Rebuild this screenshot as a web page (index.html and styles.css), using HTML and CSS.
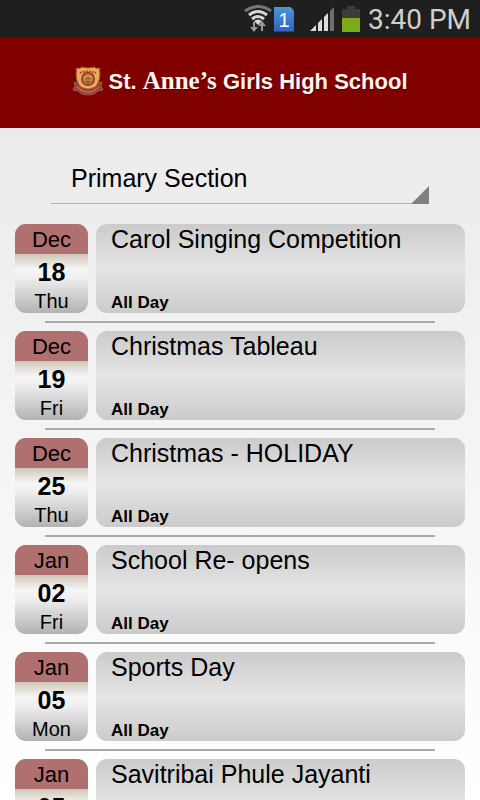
FILE: index.html
```html
<!DOCTYPE html>
<html lang="en">
<head>
  <meta charset="UTF-8" />
  <meta name="viewport" content="width=device-width, initial-scale=1" />
  <title>St. Anne’s Girls High School</title>
  <link rel="stylesheet" href="styles.css">
</head>
<body>

  <div class="status-bar">
    <svg class="wifi" width="28" height="28" viewBox="0 0 28 28" fill="none" stroke="#d6d6d6" stroke-width="3">
      <path d="M1 6Q14 -3 27 6" stroke="#777" />
      <path d="M5 10Q14 3 23 10" />
      <path d="M8 14Q14 9 20 14" />
      <path d="M10 16Q14 13 18 16L14 20z" fill="#d6d6d6" stroke="none" />
      <path d="M10 17v7M18 26v-7" stroke="#999" stroke-width="2" />
      <path d="M6 22h8l-4 5zM14 21h8l-4 -5z" fill="#999" stroke="none" />
    </svg>
    <span class="sim">1</span>
    <svg class="signal" width="24" height="24" viewBox="0 0 24 24" fill="#dcdcdc">
      <path d="M0 24l6-6v6zM8 24v-8l4-4v12zM14 24v-14l4-4v18z" />
      <path d="M20 24v-20l4-4v24z" fill="#6e6e6e" />
    </svg>
    <svg class="battery" width="18" height="26" viewBox="0 0 18 26">
      <path d="M5 0h8v3h5v9H0V3h5z" fill="#3c3c3c" />
      <path d="M0 12h18v14H0z" fill="#7cab17" />
    </svg>
    <span class="time">3:40 PM</span>
  </div>

  <header class="header">
    <svg class="crest" width="32" height="30" viewBox="0 0 32 30">
      <path d="M4 2q4 1 6-1q6 2 12 0q2 2 6 1q-1 3 0 6q0 13-12 18Q4 21 4 8q1-3 0-6z" fill="#eba955" stroke="#8c5638" />
      <path d="M8 7q8-3 16 0" fill="none" stroke="#a8502f" stroke-width="2" stroke-dasharray="2 1" />
      <circle cx="16" cy="13" r="6" fill="#d98a45" stroke="#a03c2c" stroke-width="2" />
      <path d="M16 9l2 3 2 2-3 3h-2l-3-3 2-2z" fill="#79502b" />
      <path d="M14 11h4M13 14h6" stroke="#f0c063" />
      <path d="M2 16l4 1q1 5 10 6q9-1 10-6l4-1l-1 4l2 4l-5 1q-3 4-10 4T6 25l-5-1l2-4z" fill="#a33a30" stroke="#8a6250" />
      <path d="M5 21q11 10 22 0" fill="none" stroke="#cf8065" stroke-width="2" stroke-dasharray="1 1" />
    </svg>
    <h1>St. <span class="serif">Anne’s</span> Girls High School</h1>
  </header>

  <main>
    <div class="section-picker">
      <select name="section" aria-label="Section">
        <option selected>Primary Section</option>
      </select>
    </div>

    <ul class="events">
      <li class="event">
        <div class="date"><span class="month">Dec</span><span class="day">18</span><span class="weekday">Thu</span></div>
        <div class="details"><h2>Carol Singing Competition</h2><p>All Day</p></div>
      </li>
      <li class="event">
        <div class="date"><span class="month">Dec</span><span class="day">19</span><span class="weekday">Fri</span></div>
        <div class="details"><h2>Christmas Tableau</h2><p>All Day</p></div>
      </li>
      <li class="event">
        <div class="date"><span class="month">Dec</span><span class="day">25</span><span class="weekday">Thu</span></div>
        <div class="details"><h2>Christmas - HOLIDAY</h2><p>All Day</p></div>
      </li>
      <li class="event">
        <div class="date"><span class="month">Jan</span><span class="day">02</span><span class="weekday">Fri</span></div>
        <div class="details"><h2>School Re- opens</h2><p>All Day</p></div>
      </li>
      <li class="event">
        <div class="date"><span class="month">Jan</span><span class="day">05</span><span class="weekday">Mon</span></div>
        <div class="details"><h2>Sports Day</h2><p>All Day</p></div>
      </li>
      <li class="event">
        <div class="date"><span class="month">Jan</span><span class="day">05</span></div>
        <div class="details"><h2>Savitribai Phule Jayanti</h2></div>
      </li>
    </ul>
  </main>

</body>
</html>
```
FILE: styles.css
```css
* {
  box-sizing: border-box;
}

body {
  margin: 0;
  height: 100vh;
  display: flex;
  flex-direction: column;
  font-family: "Liberation Sans", Arial, sans-serif;
  color: #000;
}

.status-bar {
  flex: none;
  display: flex;
  justify-content: flex-end;
  align-items: center;
  height: 38px;
  padding-right: 9px;
  background: #1f1f1f;
}

.sim {
  width: 20px;
  height: 25px;
  margin-left: 2px;
  background: linear-gradient(#4a97d6, #2f62c0);
  clip-path: polygon(0 0, 80% 0, 100% 16%, 100% 100%, 0 100%);
  color: #fff;
  font-size: 20px;
  line-height: 26px;
  text-align: center;
}

.signal {
  margin-left: 16px;
}

.battery {
  margin-left: 8px;
}

.time {
  margin-left: 8px;
  font-family: Roboto, sans-serif;
  font-size: 28px;
  color: #d0d0d0;
}

.header {
  flex: none;
  display: flex;
  justify-content: center;
  align-items: center;
  gap: 4px;
  height: 90px;
  padding-bottom: 4px;
  background: #800000;
}

h1 {
  margin: 0;
  font-size: 22px;
  line-height: 26px;
  color: #fff5ee;
  text-shadow: 1px 1px 1px #4a0000;
}

.serif {
  font-family: "Liberation Serif", serif;
  font-size: 25px;
}

main {
  flex: 1;
  min-height: 0;
  overflow-y: auto;
  scrollbar-width: none;
  background: linear-gradient(#ebebeb, #fff);
}

.section-picker {
  position: relative;
  margin: 24px 51px 20px;
}

.section-picker::after {
  content: "";
  position: absolute;
  right: 0;
  bottom: 0;
  width: 18px;
  height: 18px;
  background: #808080;
  clip-path: polygon(100% 0, 100% 100%, 0 100%);
  pointer-events: none;
}

select {
  display: block;
  width: 100%;
  height: 52px;
  padding: 0 20px;
  appearance: none;
  border: none;
  border-bottom: 1px solid #b4b4b4;
  border-radius: 0;
  background: none;
  font-family: inherit;
  font-size: 25px;
  color: #000;
}

.events {
  margin: 0;
  padding: 0 15px;
  list-style: none;
}

.event {
  display: flex;
  flex-wrap: wrap;
  gap: 8px;
}

/* line between two events */
.event::after {
  content: "";
  width: 100%;
  height: 2px;
  margin: 0 30px 8px;
  background: #aaa;
}

.date {
  display: flex;
  flex-direction: column;
  width: 73px;
  height: 89px;
  border-radius: 11px;
  overflow: hidden;
  background: linear-gradient(#d0c6b8 30px, #f5f5f5 45px, #f0f0f0 53px, #b2b2b2);
  text-align: center;
}

.month {
  height: 30px;
  background: #b17070;
  font-size: 22px;
  line-height: 32px;
}

.day {
  font-size: 25px;
  font-weight: bold;
  line-height: 37px;
}

.weekday {
  font-size: 20px;
  line-height: 20px;
}

.details {
  flex: 1;
  display: flex;
  flex-direction: column;
  justify-content: space-between;
  height: 89px;
  padding-left: 15px;
  border-radius: 11px;
  background: linear-gradient(#cbcbcb, #e5e5e5 50%, #cbcbcb);
}

h2 {
  margin: 0;
  font-size: 25px;
  font-weight: normal;
  line-height: 30px;
}

p {
  margin: 0;
  font-size: 17px;
  font-weight: bold;
  line-height: 20px;
}
```
